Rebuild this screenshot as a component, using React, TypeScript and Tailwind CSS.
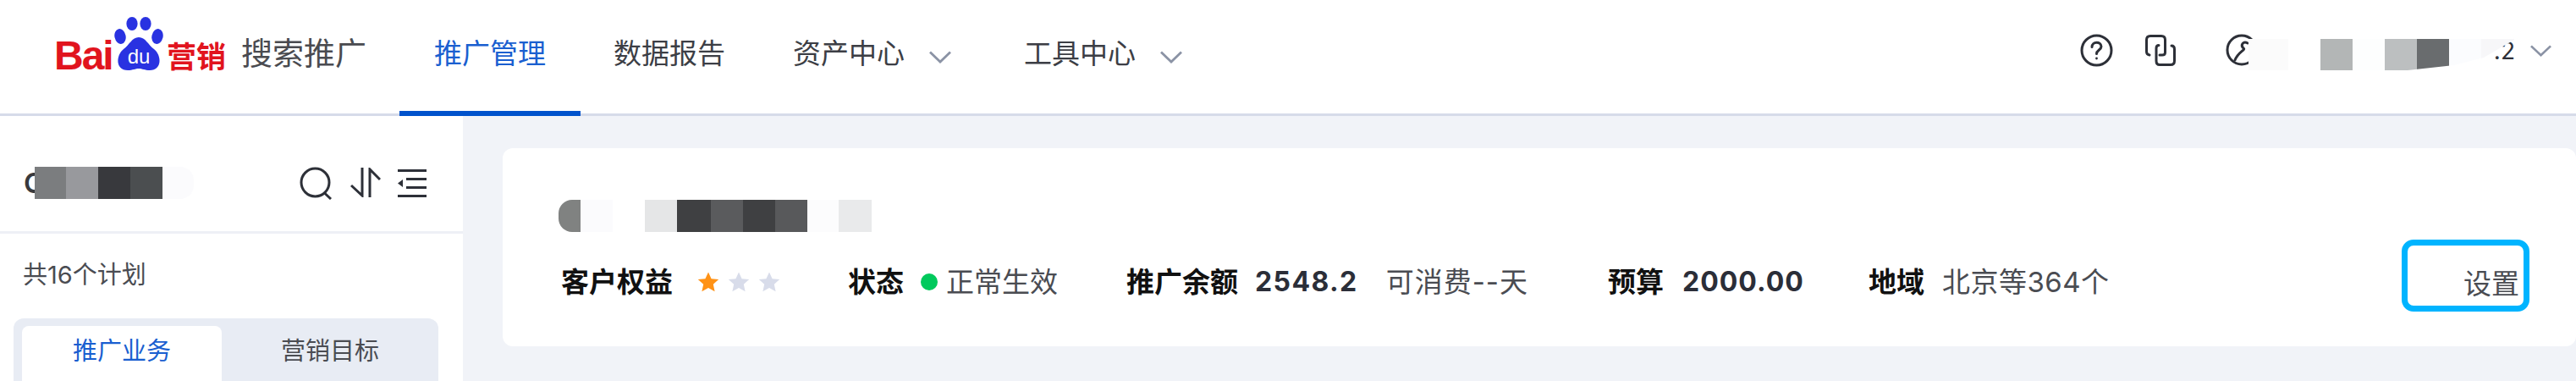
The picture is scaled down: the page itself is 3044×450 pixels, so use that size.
import React from "react";

const Chevron = ({ w = 26, h = 15 }: { w?: number; h?: number }) => (
  <svg width={w} height={h} viewBox="0 0 26 15" fill="none" stroke="#8b93a5" strokeWidth="2.8" preserveAspectRatio="none">
    <path d="M1 1.5 L13 13 L25 1.5" />
  </svg>
);

const Star = ({ color }: { color: string }) => (
  <svg width="26" height="24" viewBox="0 0 26 24" fill={color}>
    <path d="M13 0.5 L16.6 8.2 L25.2 9.1 L18.8 14.8 L20.6 23.2 L13 18.9 L5.4 23.2 L7.2 14.8 L0.8 9.1 L9.4 8.2 Z" />
  </svg>
);

const Logo = () => (
  <div className="flex items-end w-[203px] h-[64px] shrink-0">
    <span className="font-['Liberation_Sans',sans-serif] font-bold text-[#e1141e] text-[48px] leading-[36px] tracking-[-2px] w-[71px]">Bai</span>
    <svg width="58" height="64" viewBox="0 0 58 64" className="shrink-0">
      <ellipse cx="21" cy="8" rx="6.6" ry="8" fill="#2932e1" />
      <ellipse cx="37" cy="8" rx="6.6" ry="8" fill="#2932e1" />
      <ellipse cx="7" cy="23" rx="6.6" ry="9" fill="#2932e1" transform="rotate(-12 7 23)" />
      <ellipse cx="51" cy="23" rx="6.6" ry="9" fill="#2932e1" transform="rotate(12 51 23)" />
      <path d="M29 24 C37 24 40 33 47 38 C56 45 57 63 42 63 C36 63 33 61 29 61 C25 61 22 63 16 63 C1 63 2 45 11 38 C18 33 21 24 29 24 Z" fill="#2932e1" />
      <text x="29" y="55" textAnchor="middle" fontFamily="Liberation Sans, sans-serif" fontSize="24" fontWeight="400" fill="#ffffff">du</text>
    </svg>
    <span className="font-['Noto_Sans_CJK_SC',sans-serif] font-bold text-[#e1141e] text-[35px] leading-[38px] ml-[4px] whitespace-nowrap">营销</span>
  </div>
);

const Sq = ({ w, c, extra = "" }: { w: string; c: string; extra?: string }) => <div className={`${w} ${c} ${extra} h-full shrink-0`} />;

export default function App() {
  return (
    <div className="w-[3044px] h-[450px] overflow-hidden bg-[#f1f3f8] font-['Inter','Noto_Sans_CJK_SC',sans-serif] text-[#3c3e45]">
      {/* header */}
      <header className="relative flex items-center h-[137px] bg-white border-b-[3px] border-[#d6dbe9] pl-[64px]">
        <div className="mt-[-31px]"><Logo /></div>
        <span className="text-[37px] leading-[48px] text-[#4a4b50] ml-[18px] mb-[6px] whitespace-nowrap">搜索推广</span>
        <div className="relative flex items-center justify-center w-[214px] h-full ml-[39px]">
          <span className="text-[33px] text-[#1a5fd0] mb-[6px] whitespace-nowrap">推广管理</span>
          <div className="absolute left-0 right-0 bottom-[-3px] h-[6px] bg-[#0052cc]" />
        </div>
        <span className="text-[33px] ml-[39px] mb-[6px] whitespace-nowrap">数据报告</span>
        <span className="text-[33px] ml-[80px] mb-[6px] whitespace-nowrap">资产中心</span>
        <div className="ml-[29px] mt-[1px]"><Chevron /></div>
        <span className="text-[33px] ml-[86px] mb-[6px] whitespace-nowrap">工具中心</span>
        <div className="ml-[29px] mt-[1px]"><Chevron /></div>

        <div className="ml-auto relative flex items-center h-full mt-[-16px]">
          <svg width="39" height="39" viewBox="0 0 39 39" fill="none" stroke="#2d3038" strokeWidth="3">
            <circle cx="19.5" cy="19.5" r="17.5" />
            <path d="M14 15.5 C14 8.5 25 8.5 25 15 C25 19 19.5 19 19.5 23.5" strokeLinecap="round" />
            <circle cx="19.5" cy="29" r="1.4" fill="#2d3038" stroke="none" />
          </svg>
          <svg width="36" height="37" viewBox="0 0 36 37" fill="none" stroke="#2d3038" strokeWidth="3" className="ml-[38px]">
            <path d="M5 24 C2.5 23.5 1.5 22 1.5 20 L1.5 6 C1.5 3 3 1.5 6 1.5 L19 1.5 C22 1.5 23.5 3 23.5 6 L23.5 21 C23.5 23 22 24 20 24 L17 24" strokeLinecap="round" />
            <path d="M13 20 L13 16 C13 13.5 14 12.5 16 12.5 M13 20 L13 31 C13 34 14.5 35.5 17 35.5 L30 35.5 C33 35.5 34.5 34 34.5 31 L34.5 17 C34.5 14 33 13 31 13" strokeLinecap="round" />
          </svg>
          <div className="relative w-[342px] h-full ml-[59px]">
            <div className="flex items-center h-full">
              <svg width="38" height="38" viewBox="0 0 38 38" fill="none" stroke="#2d3038" strokeWidth="3" className="shrink-0">
                <circle cx="19" cy="19" r="17" />
                <path d="M26 11 C21 8 17 13 21 17 C24 19 15 21 11 31" strokeLinecap="round" />
              </svg>
              <span className="ml-auto mt-[2px] text-[28px] leading-[36px] text-[#2d3038]">.2</span>
            </div>
            <div className="absolute left-[27px] top-[54px] flex h-[37px] [clip-path:polygon(0_0,314px_0,314px_1px,278px_22px,243px_31px,188px_37px,0_37px)]">
              <Sq w="w-[47px]" c="bg-[#fbfbfb]" />
              <Sq w="w-[38px]" c="bg-white" />
              <Sq w="w-[38px]" c="bg-[#b3b6b6]" />
              <Sq w="w-[38px]" c="bg-[#fdfefe]" />
              <Sq w="w-[38px]" c="bg-[#bcbfc0]" />
              <Sq w="w-[38px]" c="bg-[#696c6e]" />
              <Sq w="w-[38px]" c="bg-[#fbfcfe]" />
              <Sq w="w-[39px]" c="bg-[#f7f7f9]" />
            </div>
          </div>
          <div className="mr-[29px] ml-[18px] mt-[2px]"><Chevron w={25} h={14} /></div>
        </div>
      </header>

      <div className="flex h-[313px]">
        {/* sidebar */}
        <aside className="w-[547px] shrink-0 bg-white">
          <div className="flex items-start h-[139px] pt-[60px] pl-[28px] border-b-[3px] border-[#eef0f6]">
            <span className="text-[33px] leading-[38px] font-semibold text-[#38393d] w-[13px]">C</span>
            <div className="flex h-[38px]">
              <Sq w="w-[37px]" c="bg-[#7b7d7f]" />
              <Sq w="w-[38px]" c="bg-[#98999d]" />
              <Sq w="w-[38px]" c="bg-[#38393d]" />
              <Sq w="w-[38px]" c="bg-[#4b4e50]" />
              <Sq w="w-[37px]" c="bg-[#fbfbfd]" extra="rounded-r-[16px]" />
            </div>
            <svg width="40" height="39" viewBox="0 0 40 39" fill="none" stroke="#2d3038" strokeWidth="3" className="ml-[125px]">
              <circle cx="18.5" cy="18.5" r="16.5" />
              <path d="M29.5 31 L37 38" />
            </svg>
            <svg width="36" height="35" viewBox="0 0 36 35" fill="none" stroke="#2d3038" strokeWidth="3" className="ml-[20px] mt-[1px]">
              <path d="M14 0 L14 33 L1 21" />
              <path d="M23 35 L23 2 L35 14" />
            </svg>
            <svg width="34" height="33" viewBox="0 0 34 33" className="ml-[20px] mt-[3px]" fill="#2d3038">
              <rect x="0" y="0" width="34" height="3" />
              <rect x="10" y="10" width="24" height="3" />
              <rect x="10" y="20" width="24" height="3" />
              <rect x="0" y="30" width="34" height="3" />
              <path d="M0 16.5 L6 12 L6 21 Z" />
            </svg>
          </div>
          <div className="pl-[27px] mt-[31px] text-[29px] leading-[36px] text-[#4a4c52] whitespace-nowrap">共16个计划</div>
          <div className="flex mt-[33px] mx-[16px] w-[502px] h-[120px] pt-[9px] pl-[10px] rounded-t-[12px] bg-[#e8ecf4] text-[29px] leading-[60px]">
            <div className="w-[236px] h-[100px] rounded-t-[8px] bg-white text-center text-[#1a5fd0]">推广业务</div>
            <div className="flex-1 text-center text-[#4a4c52]">营销目标</div>
          </div>
        </aside>

        {/* main */}
        <main className="flex-1 min-w-0 pl-[47px] pt-[38px]">
          <section className="relative h-[234px] rounded-[12px] bg-white pt-[61px] pl-[66px]">
            <div className="flex h-[38px]">
              <Sq w="w-[26px]" c="bg-[#808281]" extra="rounded-l-[16px]" />
              <Sq w="w-[38px]" c="bg-[#fbfbfd]" />
              <Sq w="w-[38px]" c="bg-white" />
              <Sq w="w-[38px]" c="bg-[#e5e6e7]" />
              <Sq w="w-[40px]" c="bg-[#3f4042]" />
              <Sq w="w-[38px]" c="bg-[#5a5b5d]" />
              <Sq w="w-[38px]" c="bg-[#3f4042]" />
              <Sq w="w-[38px]" c="bg-[#58595b]" />
              <Sq w="w-[37px]" c="bg-[#fcfcfd]" />
              <Sq w="w-[39px]" c="bg-[#e9eaeb]" />
            </div>
            <div className="flex items-center h-[38px] mt-[40px] pl-[3px] text-[33px] leading-[38px] whitespace-nowrap">
              <span className="font-semibold text-[#111111]">客户权益</span>
              <div className="flex items-center gap-[10px] ml-[29px]">
                <Star color="#ff9216" />
                <Star color="#d8dcea" />
                <Star color="#d8dcea" />
              </div>
              <span className="font-semibold text-[#111111] ml-[80px]">状态</span>
              <div className="w-[20px] h-[20px] rounded-full bg-[#00c95c] ml-[20px]" />
              <span className="ml-[10px] text-[#4a4c52]">正常生效</span>
              <span className="font-semibold text-[#111111] ml-[81px]">推广余额</span>
              <span className="font-bold text-[#2b2e38] ml-[20px] text-[32px] tracking-[1.4px]">2548.2</span>
              <span className="ml-[33px] text-[#4a4c52] tracking-[1px]">可消费--天</span>
              <span className="font-semibold text-[#111111] ml-[94px]">预算</span>
              <span className="font-bold text-[#2b2e38] ml-[22px] text-[32px] tracking-[1px]">2000.00</span>
              <span className="font-semibold text-[#111111] ml-[76px]">地域</span>
              <span className="ml-[21px] text-[#4a4c52] tracking-[0.5px]">北京等364个</span>
              <span className="ml-auto mr-[67px] mt-[4px] text-[#4a4c52] text-[33px]">设置</span>
            </div>
            <div className="absolute right-[55px] top-[108px] w-[151px] h-[85px] border-[7px] border-[#00b4ff] rounded-[14px]" />
          </section>
        </main>
      </div>
    </div>
  );
}
